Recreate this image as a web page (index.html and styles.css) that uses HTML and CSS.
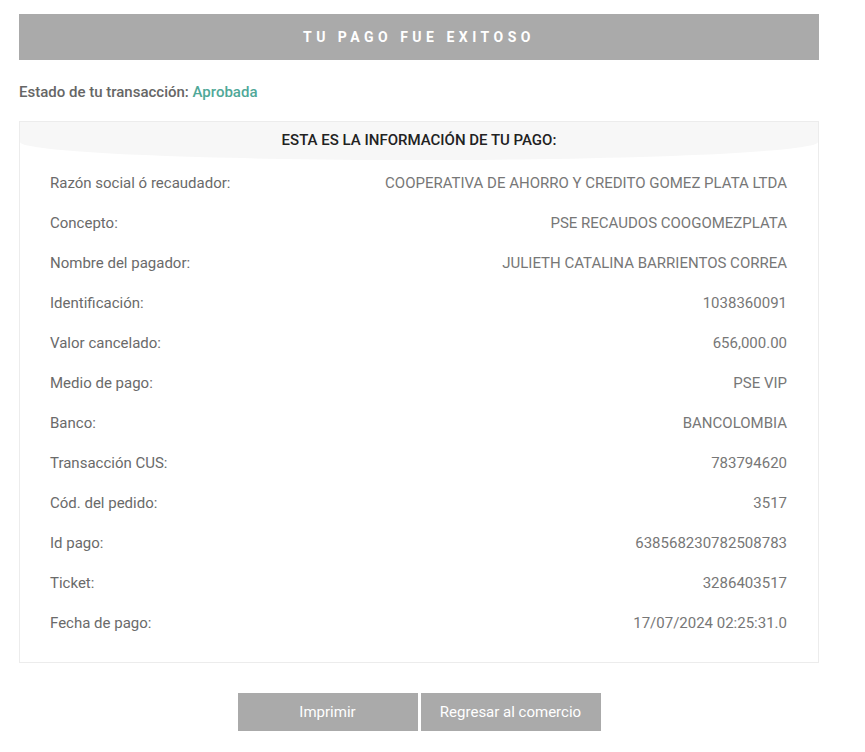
FILE: index.html
```html
<!DOCTYPE html>
<html lang="es">
<head>
<meta charset="utf-8">
<title>Tu pago fue exitoso</title>
<link rel="stylesheet" href="styles.css">
</head>
<body>
<div class="page">
  <div class="banner">TU PAGO FUE EXITOSO</div>
  <p class="status">Estado de tu transacción: <span class="ok">Aprobada</span></p>
  <div class="card">
    <div class="card-head">ESTA ES LA INFORMACIÓN DE TU PAGO:</div>
    <div class="rows">
      <div class="row"><span>Razón social ó recaudador:</span><span>COOPERATIVA DE AHORRO Y CREDITO GOMEZ PLATA LTDA</span></div>
      <div class="row"><span>Concepto:</span><span>PSE RECAUDOS COOGOMEZPLATA</span></div>
      <div class="row"><span>Nombre del pagador:</span><span>JULIETH CATALINA BARRIENTOS CORREA</span></div>
      <div class="row"><span>Identificación:</span><span>1038360091</span></div>
      <div class="row"><span>Valor cancelado:</span><span>656,000.00</span></div>
      <div class="row"><span>Medio de pago:</span><span>PSE VIP</span></div>
      <div class="row"><span>Banco:</span><span>BANCOLOMBIA</span></div>
      <div class="row"><span>Transacción CUS:</span><span>783794620</span></div>
      <div class="row"><span>Cód. del pedido:</span><span>3517</span></div>
      <div class="row"><span>Id pago:</span><span>638568230782508783</span></div>
      <div class="row"><span>Ticket:</span><span>3286403517</span></div>
      <div class="row"><span>Fecha de pago:</span><span>17/07/2024 02:25:31.0</span></div>
    </div>
  </div>
  <div class="actions">
    <button class="btn">Imprimir</button>
    <button class="btn">Regresar al comercio</button>
  </div>
</div>
</body>
</html>
```
FILE: styles.css
```css
html, body { margin: 0; padding: 0; background: #fff; }
body { font-family: Roboto, "Liberation Sans", sans-serif; color: #666; }
.page { width: 800px; padding: 14px 0 0 19px; }
.banner {
  height: 46px; background: #aaa; color: #fff;
  display: flex; align-items: center; justify-content: center;
  font-weight: 700; font-size: 14px; letter-spacing: 4.5px;
}
.status { margin: 23px 0 0; font-size: 15px; font-weight: 500; color: #666; line-height: 18px; }
.ok { color: #4fa898; }
.card {
  margin-top: 20px; border: 1px solid #ececec; padding-bottom: 19px;
}
.card-head {
  height: 38px; background: #f7f7f7; color: #222;
  border-radius: 0 0 50% 50% / 0 0 18px 18px;
  display: flex; align-items: center; justify-content: center;
  font-size: 15px; font-weight: 500; padding-bottom: 2px; box-sizing: border-box;
}
.rows { padding: 0 31px 0 30px; margin-top: 3px; }
.row {
  display: flex; justify-content: space-between;
  height: 40px; align-items: center; font-size: 15px; color: #6a6a6a;
}
.row span:last-child { color: #777; }
.actions { display: flex; justify-content: center; gap: 3px; margin-top: 30px; }
.btn {
  width: 180px; height: 38px; border: 0; background: #aaa; color: #fff;
  font-family: inherit; font-size: 15px; padding: 0;
}
```
